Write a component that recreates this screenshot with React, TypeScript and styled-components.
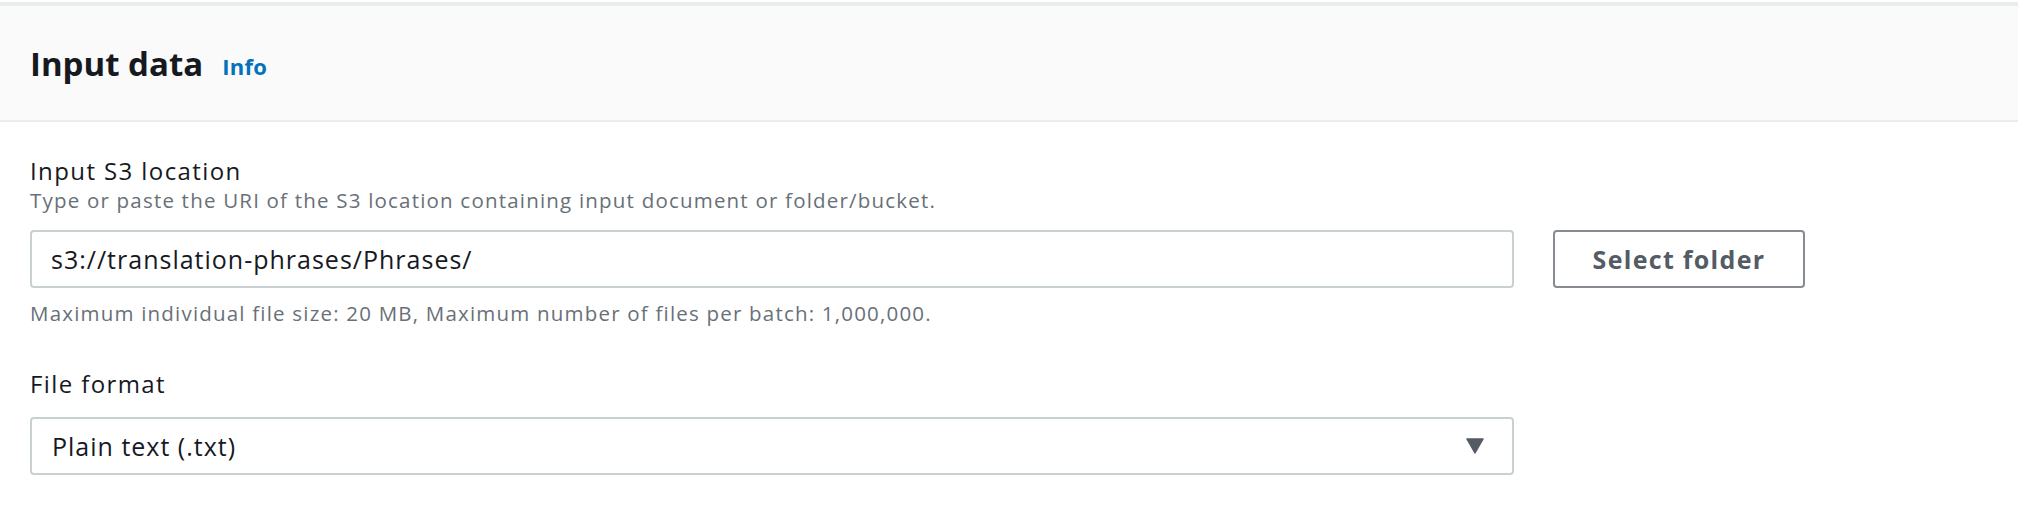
import React from 'react';
import styled, { createGlobalStyle } from 'styled-components';

const GlobalStyle = createGlobalStyle`
  html, body {
    margin: 0;
    padding: 0;
    background: #ffffff;
    font-family: "Open Sans", "Noto Sans", Arial, sans-serif;
    color: #16191f;
  }
`;

const Panel = styled.section`
  width: 2018px;
  margin-top: 2px;
  border-top: 4px solid #eaeded;
  background: #ffffff;
`;

const Header = styled.header`
  height: 114px;
  display: flex;
  align-items: center;
  gap: 19px;
  padding-left: 30px;
  background: #fafafa;
  border-bottom: 2px solid #eaeded;
`;

const Title = styled.h2`
  margin: 0;
  font-size: 33px;
  font-weight: 700;
  color: #16191f;
`;

const InfoLink = styled.a`
  font-size: 22px;
  font-weight: 700;
  letter-spacing: 0.3px;
  color: #0073bb;
  text-decoration: none;
  margin-top: 6px;
`;

const Body = styled.div`
  padding: 34px 30px 0;
  display: flex;
  flex-direction: column;
  gap: 42px;
`;

const Field = styled.div`
  display: flex;
  flex-direction: column;
`;

const Label = styled.label`
  font-size: 24px;
  line-height: 30px;
  letter-spacing: 1.4px;
  color: #16191f;
`;

const Hint = styled.div<{ $above?: boolean }>`
  font-size: 20.5px;
  line-height: 28px;
  letter-spacing: 1.2px;
  color: #687078;
  margin: ${(p) => (p.$above ? '0 0 16px' : '11px 0 0')};
`;

const Row = styled.div<{ $offset?: number }>`
  display: flex;
  align-items: center;
  gap: 39px;
  margin-top: ${(p) => p.$offset ?? 0}px;
`;

const Control = styled.div<{ $indent: number }>`
  box-sizing: border-box;
  width: 1484px;
  height: 58px;
  display: flex;
  align-items: center;
  justify-content: space-between;
  padding: 0 28px 0 ${(p) => p.$indent}px;
  border: 2px solid #c9d0d1;
  border-radius: 4px;
  background: #ffffff;
  font-size: 25px;
  letter-spacing: 1px;
  color: #16191f;
`;

const Button = styled.button`
  box-sizing: border-box;
  width: 252px;
  height: 58px;
  border: 2px solid #878c92;
  border-radius: 4px;
  background: #ffffff;
  font-family: inherit;
  font-size: 25px;
  font-weight: 700;
  letter-spacing: 1.3px;
  color: #545b64;
  cursor: pointer;
`;

const Caret = () => (
  <svg width="18" height="16" viewBox="0 0 18 16">
    <path d="M1 1 H17 L9 15 Z" fill="#545b64" stroke="#545b64" strokeWidth="1.5" strokeLinejoin="round" />
  </svg>
);

export default function App() {
  return (
    <>
      <GlobalStyle />
      <Panel>
        <Header>
          <Title>Input data</Title>
          <InfoLink href="#">Info</InfoLink>
        </Header>
        <Body>
          <Field>
            <Label>Input S3 location</Label>
            <Hint $above>Type or paste the URI of the S3 location containing input document or folder/bucket.</Hint>
            <Row>
              <Control $indent={19}>s3://translation-phrases/Phrases/</Control>
              <Button>Select folder</Button>
            </Row>
            <Hint>Maximum individual file size: 20 MB, Maximum number of files per batch: 1,000,000.</Hint>
          </Field>
          <Field>
            <Label>File format</Label>
            <Row $offset={18}>
              <Control $indent={20}>
                <span>Plain text (.txt)</span>
                <Caret />
              </Control>
            </Row>
          </Field>
        </Body>
      </Panel>
    </>
  );
}
